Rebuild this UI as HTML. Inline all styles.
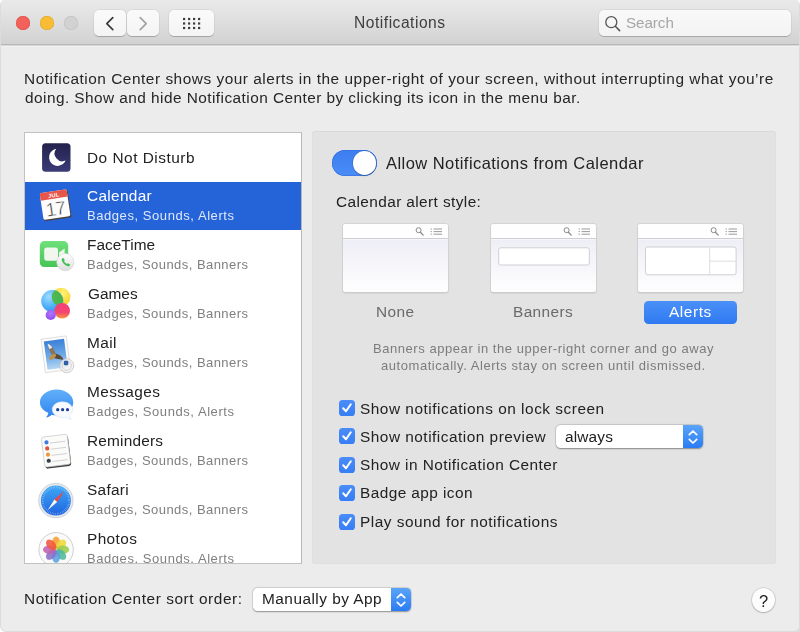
<!DOCTYPE html>
<html>
<head>
<meta charset="utf-8">
<title>Notifications</title>
<style>
*{box-sizing:border-box;margin:0;padding:0}
html,body{width:800px;height:632px;overflow:hidden;background:#fff;font-family:"Liberation Sans",sans-serif;color:#222}
#frame{position:absolute;left:0;top:0;width:800px;height:632px;background:#dcdcdc;border-radius:5px 5px 0 6px}
#win{position:absolute;left:1px;top:0;width:797.7px;height:631px;background:#ececec;border-radius:4px 4px 5px 5px;overflow:hidden}
#win>*{margin-left:-1px}
#tb{position:absolute;left:0;top:0;width:801px;height:46.8px;background:linear-gradient(#eaeaea,#d2d2d2 44px,#b9b9b9 44.2px,#b9b9b9 45.4px,#f3f3f3 45.6px)}
.t{position:absolute;white-space:nowrap;line-height:20px;will-change:transform}
.tl{position:absolute;top:15.5px;width:14px;height:14px;border-radius:50%}
.btn{position:absolute;top:9.5px;height:26px;background:linear-gradient(#fafafa,#f4f4f4);border-radius:5px;box-shadow:0 .5px .8px rgba(0,0,0,.22),0 0 0 .5px rgba(0,0,0,.06)}
#search{position:absolute;left:599px;top:10px;width:191.5px;height:25.5px;background:linear-gradient(#f9f9f9,#f3f3f3);border-radius:5px;box-shadow:0 .5px .8px rgba(0,0,0,.2),0 0 0 .5px rgba(0,0,0,.07)}
#list{position:absolute;left:24px;top:131.8px;width:278.2px;height:432.2px;background:#fff;border:1px solid #c2c2c2;border-right-color:#b8b8b8;overflow:hidden}
#list .t{margin-left:-25px;margin-top:-133px}
.row{position:absolute;left:0;width:276px;height:49px}
.row.sel{background:#2563d8}
.ic{position:absolute;left:10px;top:4px;width:42px;height:42px}
#panel{position:absolute;left:311.5px;top:131.3px;width:464.3px;height:433.2px;background:#e3e3e3;border-radius:3.5px;box-shadow:inset 0 1px 0 #dadada,inset 0 0 0 1px #dfdfdf}
.thumb{position:absolute;top:223.7px;width:105px;height:68px;background:linear-gradient(#fff 0,#fff 15px,#eeeef6 16px,#fdfdfe 92%);border-radius:2.5px;box-shadow:0 0 0 .7px #cfcfcf,0 1px 2px rgba(0,0,0,.2)}
.thumb .bar{position:absolute;left:0;top:0;width:100%;height:15px;background:#fefefe;border-bottom:1px solid #cfcfd3;border-radius:2.5px 2.5px 0 0}
.cb{position:absolute;left:339.2px;width:16.2px;height:15.8px;border-radius:3.6px;background:linear-gradient(#4a8df8,#377df5)}
.sel2{position:absolute;height:23.5px;background:#fff;border-radius:4.5px;box-shadow:0 .5px 1.5px rgba(0,0,0,.35),0 0 0 .5px rgba(0,0,0,.12)}
.sel2 .st{position:absolute;right:0;top:0;width:20.3px;height:23.5px;border-radius:0 4.5px 4.5px 0;background:linear-gradient(#5aa4f9,#2b7cf3)}
#toggle{position:absolute;left:331.6px;top:150px;width:45.6px;height:25.6px;border-radius:13px;background:linear-gradient(#3c7df0,#4b8df7);box-shadow:inset 0 0 0 .5px #2f6ad8}
#knob{position:absolute;right:.800px;top:.900px;width:23.6px;height:23.8px;border-radius:50%;background:#fff;box-shadow:0 0 0 .5px rgba(0,0,0,.15),0 1px 1.5px rgba(0,0,0,.2)}
#alertsbtn{position:absolute;left:644px;top:300.5px;width:92.5px;height:23.5px;border-radius:4.5px;background:linear-gradient(#4a90f8,#2f7af2)}
#helpbtn{position:absolute;left:751.7px;top:588.1px;width:23.7px;height:23.7px;border-radius:50%;background:#fcfcfc;box-shadow:0 .5px 1.5px rgba(0,0,0,.35),0 0 0 .5px rgba(0,0,0,.12)}

</style>
</head>
<body>
<div id="frame"></div>
<div id="win">
 <div id="tb">
  <div class="tl" style="left:16px;background:#f2615a;box-shadow:inset 0 0 0 .5px #dd4a42"></div>
  <div class="tl" style="left:40px;background:#f8bd35;box-shadow:inset 0 0 0 .5px #dea22a"></div>
  <div class="tl" style="left:63.5px;background:#d2d2d2;box-shadow:inset 0 0 0 .5px #bcbcbc"></div>
  <div class="btn" style="left:93.5px;width:32px">
   <svg width="32" height="27" viewBox="0 0 32 27"><path d="M18.8 7.7 L12.8 13.7 L18.8 19.7" fill="none" stroke="#3a3a3a" stroke-width="1.7" stroke-linecap="round" stroke-linejoin="round"/></svg>
  </div>
  <div class="btn" style="left:127px;width:32px">
   <svg width="32" height="27" viewBox="0 0 32 27"><path d="M13.2 7.7 L19.2 13.7 L13.2 19.7" fill="none" stroke="#a2a2a2" stroke-width="1.7" stroke-linecap="round" stroke-linejoin="round"/></svg>
  </div>
  <div class="btn" style="left:169px;width:44.5px">
   <svg width="45" height="27" viewBox="0 0 45 27" fill="#3d3d3d">
    <g><rect x="14" y="7.9" width="2.2" height="2.2"/><rect x="19" y="7.9" width="2.2" height="2.2"/><rect x="24" y="7.9" width="2.2" height="2.2"/><rect x="29" y="7.9" width="2.2" height="2.2"/></g>
    <g><rect x="14" y="12.4" width="2.2" height="2.2"/><rect x="19" y="12.4" width="2.2" height="2.2"/><rect x="24" y="12.4" width="2.2" height="2.2"/><rect x="29" y="12.4" width="2.2" height="2.2"/></g>
    <g><rect x="14" y="16.9" width="2.2" height="2.2"/><rect x="19" y="16.9" width="2.2" height="2.2"/><rect x="24" y="16.9" width="2.2" height="2.2"/><rect x="29" y="16.9" width="2.2" height="2.2"/></g>
    </svg>
  </div>
  <div class="t" id="title" style="left:353.5px;top:13.08px;font-size:15.6px;letter-spacing:0.513px;color:#3e3e3e;">Notifications</div>
  <div id="search">
   <svg style="position:absolute;left:4px;top:4px" width="20" height="20" viewBox="0 0 20 20"><circle cx="8.3" cy="8.2" r="5.5" fill="none" stroke="#555" stroke-width="1.3"/><path d="M12.3 12.3 L16.6 16.6" stroke="#555" stroke-width="1.5" stroke-linecap="round"/></svg>
  </div>
  <div class="t" id="search_t" style="left:625.75px;top:12.64px;font-size:15.2px;letter-spacing:-0.059px;color:#a6a6a6;">Search</div>
 </div>

 <div class="t" id="desc1" style="left:23.8px;top:68.56px;font-size:15.4px;letter-spacing:0.525px;color:#262626;">Notification Center shows your alerts in the upper-right of your screen, without interrupting what you’re</div>
 <div class="t" id="desc2" style="left:24.6px;top:87.56px;font-size:15.4px;letter-spacing:0.446px;color:#262626;">doing. Show and hide Notification Center by clicking its icon in the menu bar.</div>

 <div id="list">
  <div class="row" style="top:0px"><svg class="ic" width="42" height="42" viewBox="0 0 42 42"><defs><linearGradient id="gd" x1="0" y1="0" x2="0" y2="1"><stop offset="0" stop-color="#23224c"/><stop offset="1" stop-color="#3c3a76"/></linearGradient></defs>
<rect x="7.1" y="6.3" width="28.4" height="28.4" rx="3.5" fill="url(#gd)"/>
<path d="M21.2 11.8 A8.6 8.6 0 1 0 30.6 23.6 A7.8 7.8 0 0 1 21.2 11.8 Z" fill="#fff"/></svg></div>
  <div class="t" id="n_dnd" style="left:87.3px;top:148.46px;font-size:15.4px;letter-spacing:0.504px;color:#222;">Do Not Disturb</div>
  <div class="row sel" style="top:49px;height:48px"><svg class="ic" width="42" height="42" viewBox="0 0 42 42"><g transform="rotate(-8.5 20.5 19.5)">
<rect x="7.3" y="6" width="27.4" height="27.5" rx="1.6" fill="#4a4038"/>
<rect x="6.6" y="5" width="27.2" height="27" rx="1.6" fill="#fdfdfd"/>
<path d="M6.6 6.6 a1.6 1.6 0 0 1 1.6 -1.6 h24 a1.6 1.6 0 0 1 1.6 1.6 v5.9 h-27.2 z" fill="#e8554a"/>
<text x="20.2" y="11" font-size="5.6" font-weight="bold" fill="#fff" text-anchor="middle" letter-spacing="0.2">JUL</text>
<text x="19.8" y="29.3" font-size="19" fill="#262626" stroke="#fdfdfd" stroke-width=".55" text-anchor="middle" letter-spacing="-1">17</text>
</g></svg></div>
  <div class="t" id="n_cal" style="left:87.3px;top:185.86px;font-size:15.4px;letter-spacing:0.323px;color:#fff;">Calendar</div>
  <div class="t" id="s_cal" style="left:87.3px;top:205.84px;font-size:13px;letter-spacing:0.563px;color:#dfe8fb;">Badges, Sounds, Alerts</div>
  <div class="row" style="top:98px"><svg class="ic" width="42" height="42" viewBox="0 0 42 42"><defs><linearGradient id="gf" x1="0" y1="0" x2="0" y2="1"><stop offset="0" stop-color="#6fe07a"/><stop offset="1" stop-color="#48c456"/></linearGradient>
<linearGradient id="gfb" x1="0" y1="0" x2="0" y2="1"><stop offset="0" stop-color="#ffffff"/><stop offset="1" stop-color="#dcdcdc"/></linearGradient></defs>
<rect x="4.8" y="6.1" width="28.4" height="25.9" rx="4.6" fill="url(#gf)"/>
<rect x="9.2" y="12.6" width="13.8" height="13.1" rx="2.6" fill="#f1f6ef"/>
<path d="M24 17.4 L29.6 13.6 V24.8 L24 21 Z" fill="#f1f6ef"/>
<circle cx="30.3" cy="27.2" r="8.6" fill="url(#gfb)" stroke="#cfcfcf" stroke-width=".5"/>
<path d="M26.9 23.8 c.6-1.1 1.5-1.1 1.9-.4 l.8 1.4 c.2.5 0 1-.5 1.3 c.5 1.3 1.5 2.3 2.8 2.8 c.3-.5.8-.700 1.3-.500 l1.4.800 c.700.4.700 1.3-.400 1.9 c-2.7 1.3-8.6-4.6-7.3-7.3z" fill="#42c052"/></svg></div>
  <div class="t" id="n_ft" style="left:87.3px;top:234.86px;font-size:15.4px;letter-spacing:0.027px;color:#222;">FaceTime</div>
  <div class="t" id="s_ft" style="left:87.3px;top:254.84px;font-size:13px;letter-spacing:0.453px;color:#7f7f7f;">Badges, Sounds, Banners</div>
  <div class="row" style="top:147px"><svg class="ic" width="42" height="42" viewBox="0 0 42 42"><defs>
<radialGradient id="g1" cx=".35" cy=".3" r=".85"><stop offset="0" stop-color="#9fdcff"/><stop offset=".55" stop-color="#4fb0f8"/><stop offset="1" stop-color="#2f86f0"/></radialGradient>
<radialGradient id="g2" cx=".6" cy=".3" r=".8"><stop offset="0" stop-color="#fff27a"/><stop offset=".6" stop-color="#f8d83a"/><stop offset="1" stop-color="#f2b828"/></radialGradient>
<linearGradient id="g3" x1="0" y1="0" x2="0" y2="1"><stop offset="0" stop-color="#f2407e"/><stop offset=".6" stop-color="#f5456e"/><stop offset="1" stop-color="#f99a3c"/></linearGradient>
<radialGradient id="g4" cx=".5" cy=".35" r=".8"><stop offset="0" stop-color="#b078ff"/><stop offset="1" stop-color="#8a3ee8"/></radialGradient>
<clipPath id="cpb"><circle cx="17.2" cy="17" r="11"/></clipPath>
</defs>
<circle cx="26.1" cy="13" r="9.3" fill="url(#g2)"/>
<circle cx="17.2" cy="17" r="11" fill="url(#g1)"/>
<circle cx="26.1" cy="13" r="9.3" fill="#4cb544" fill-opacity=".92" clip-path="url(#cpb)"/>
<circle cx="27.2" cy="26.8" r="7.8" fill="url(#g3)"/>
<circle cx="15.7" cy="31" r="5.1" fill="url(#g4)"/></svg></div>
  <div class="t" id="n_gm" style="left:87.9px;top:283.86px;font-size:15.4px;letter-spacing:-0.005px;color:#222;">Games</div>
  <div class="t" id="s_gm" style="left:87.3px;top:303.83px;font-size:13px;letter-spacing:0.453px;color:#7f7f7f;">Badges, Sounds, Banners</div>
  <div class="row" style="top:196px"><svg class="ic" width="42" height="42" viewBox="0 0 42 42"><defs><linearGradient id="gs" x1="0" y1="0" x2="0" y2="1"><stop offset="0" stop-color="#3c80d6"/><stop offset=".55" stop-color="#6eaae8"/><stop offset="1" stop-color="#b4d6f2"/></linearGradient></defs>
<g transform="rotate(-7.5 20.8 21.3)">
<rect x="8.1" y="4.4" width="25.4" height="33.8" fill="#fcfcfc" stroke="#d4d4d4" stroke-width=".7"/>
<rect x="10.6" y="7" width="20.4" height="28.6" fill="url(#gs)"/>
</g>
<path d="M12.6 10.8 C15.6 11.4 19.4 16.4 20.6 20.6 L17.4 23 C15.6 19.4 13 15.4 12.6 10.8Z" fill="#8a7458"/>
<path d="M12.6 10.8 C14.6 11.2 16.2 13 17.2 14.6 L14.6 16.2 C13.6 14.4 12.8 12.6 12.6 10.8Z" fill="#ecebe6"/>
<path d="M19 20.8 C23.4 20.6 27.4 23.4 28.8 27 C25.2 26.4 21 26.2 17.8 24.6Z" fill="#5a4a3c"/>
<ellipse cx="17.6" cy="23.8" rx="4" ry="2.1" fill="#b8924e" transform="rotate(-38 17.6 23.8)"/>
<circle cx="31.8" cy="32.7" r="7" fill="#f0f0f0" fill-opacity=".82" stroke="#bdbdbd" stroke-width=".7"/>
<circle cx="31.8" cy="32.7" r="4.6" fill="none" stroke="#c4c4c4" stroke-width=".6"/>
<rect x="28.9" y="27.8" width="4.4" height="4.4" rx="1" fill="#2f5fa8"/></svg></div>
  <div class="t" id="n_mail" style="left:87.3px;top:332.86px;font-size:15.4px;letter-spacing:0.4px;color:#222;">Mail</div>
  <div class="t" id="s_mail" style="left:87.3px;top:352.83px;font-size:13px;letter-spacing:0.453px;color:#7f7f7f;">Badges, Sounds, Banners</div>
  <div class="row" style="top:245px"><svg class="ic" width="42" height="42" viewBox="0 0 42 42"><defs><linearGradient id="gm1" x1="0" y1="0" x2="0" y2="1"><stop offset="0" stop-color="#62b0fa"/><stop offset="1" stop-color="#2f84f0"/></linearGradient></defs>
<path d="M21.6 7.6 c9.2 0 16.7 5.7 16.7 12.8 s-7.5 12.8-16.7 12.8 c-1.7 0-3.3-.2-4.8-.550 c-1.5 1.6-3.5 2.5-5.8 2.65 c1.3-1.2 2.1-2.8 2.3-4.5 c-5.1-2.3-8.4-6.1-8.4-10.4 c0-7.1 7.5-12.8 16.7-12.8z" fill="url(#gm1)"/>
<path d="M27.4 19.8 c5.7 0 10.2 3.5 10.2 7.8 c0 2.2-1.2 4.2-3.1 5.6 c.1 1.6.8 3 2 4 c-2 0-3.9-.8-5.2-2.2 c-1.2.3-2.5.4-3.9.4 c-5.7 0-10.2-3.5-10.2-7.8 s4.5-7.8 10.2-7.8z" fill="#f7fafe" stroke="#cfdff3" stroke-width=".5"/>
<circle cx="22.7" cy="27.7" r="1.6" fill="#1f3f9a"/><circle cx="27.6" cy="27.7" r="1.6" fill="#1f3f9a"/><circle cx="32.5" cy="27.7" r="1.6" fill="#1f3f9a"/></svg></div>
  <div class="t" id="n_msg" style="left:87.3px;top:381.86px;font-size:15.4px;letter-spacing:0.4px;color:#222;">Messages</div>
  <div class="t" id="s_msg" style="left:87.3px;top:401.83px;font-size:13px;letter-spacing:0.563px;color:#7f7f7f;">Badges, Sounds, Alerts</div>
  <div class="row" style="top:294px"><svg class="ic" width="42" height="42" viewBox="0 0 42 42"><g transform="rotate(-7 21 20)">
<rect x="8.6" y="6" width="26" height="30.5" rx="2.4" fill="#3a3a3a"/>
<rect x="8" y="4.6" width="26" height="30.2" rx="2.2" fill="#fbfbf9" stroke="#c8c8c8" stroke-width=".7"/>
<g stroke="#c9c9c9" stroke-width=".8"><path d="M16 11.4H31.5M16 17.6H31.5M16 23.8H31.5M16 30H31.5"/></g>
<circle cx="12.6" cy="10.2" r="2.1" fill="#3d7be6"/>
<circle cx="12.6" cy="16.4" r="2.1" fill="#e2513d"/>
<circle cx="12.6" cy="22.6" r="2.1" fill="#ec9a3b"/>
<circle cx="12.6" cy="28.8" r="2.1" fill="#3b3f4c"/>
</g></svg></div>
  <div class="t" id="n_rem" style="left:87.3px;top:430.86px;font-size:15.4px;letter-spacing:0.198px;color:#222;">Reminders</div>
  <div class="t" id="s_rem" style="left:87.3px;top:450.83px;font-size:13px;letter-spacing:0.453px;color:#7f7f7f;">Badges, Sounds, Banners</div>
  <div class="row" style="top:343px"><svg class="ic" width="42" height="42" viewBox="0 0 42 42"><defs><linearGradient id="gsa" x1="0" y1="0" x2="0" y2="1"><stop offset="0" stop-color="#3fa8f8"/><stop offset="1" stop-color="#1e63de"/></linearGradient></defs>
<circle cx="20.9" cy="20.6" r="17.2" fill="#e6e9ee" stroke="#bfc4cc" stroke-width=".7"/>
<circle cx="20.9" cy="20.6" r="15" fill="url(#gsa)"/>
<circle cx="20.9" cy="20.6" r="13.3" fill="none" stroke="#fff" stroke-opacity=".5" stroke-width="2" stroke-dasharray=".5 1.24"/>
<path d="M29.2 11 L19.4 19.4 L22.2 22 Z" fill="#f0463c"/>
<path d="M12.6 30.2 L19.4 19.4 L22.2 22 Z" fill="#f7f7f7"/></svg></div>
  <div class="t" id="n_saf" style="left:87.3px;top:479.86px;font-size:15.4px;letter-spacing:0.292px;color:#222;">Safari</div>
  <div class="t" id="s_saf" style="left:87.3px;top:499.83px;font-size:13px;letter-spacing:0.453px;color:#7f7f7f;">Badges, Sounds, Banners</div>
  <div class="row" style="top:392px"><svg class="ic" width="42" height="42" viewBox="0 0 42 42"><circle cx="21.1" cy="20.7" r="17.2" fill="#fafafa" stroke="#cbcbcb" stroke-width=".9"/><ellipse cx="21.1" cy="13.9" rx="4.1" ry="6.3" fill="#f5a030" fill-opacity=".88" transform="rotate(0 21.1 20.7)"/><ellipse cx="21.1" cy="13.9" rx="4.1" ry="6.3" fill="#f0d838" fill-opacity=".88" transform="rotate(45 21.1 20.7)"/><ellipse cx="21.1" cy="13.9" rx="4.1" ry="6.3" fill="#98cc50" fill-opacity=".88" transform="rotate(90 21.1 20.7)"/><ellipse cx="21.1" cy="13.9" rx="4.1" ry="6.3" fill="#4cb89a" fill-opacity=".88" transform="rotate(135 21.1 20.7)"/><ellipse cx="21.1" cy="13.9" rx="4.1" ry="6.3" fill="#5aa0e0" fill-opacity=".88" transform="rotate(180 21.1 20.7)"/><ellipse cx="21.1" cy="13.9" rx="4.1" ry="6.3" fill="#8870c8" fill-opacity=".88" transform="rotate(225 21.1 20.7)"/><ellipse cx="21.1" cy="13.9" rx="4.1" ry="6.3" fill="#c060b0" fill-opacity=".88" transform="rotate(270 21.1 20.7)"/><ellipse cx="21.1" cy="13.9" rx="4.1" ry="6.3" fill="#f0583c" fill-opacity=".88" transform="rotate(315 21.1 20.7)"/></svg></div>
  <div class="t" id="n_ph" style="left:87.3px;top:528.86px;font-size:15.4px;letter-spacing:0.4px;color:#222;">Photos</div>
  <div class="t" id="s_ph" style="left:87.3px;top:548.83px;font-size:13px;letter-spacing:0.563px;color:#7f7f7f;">Badges, Sounds, Alerts</div>
 </div>

 <div id="panel"></div>
 <div id="toggle"><div id="knob"></div></div>
 <div class="t" id="allow" style="left:386px;top:153.07px;font-size:16.5px;letter-spacing:0.449px;color:#222;">Allow Notifications from Calendar</div>
 <div class="t" id="cas" style="left:336px;top:192.06px;font-size:15.4px;letter-spacing:0.4px;color:#222;">Calendar alert style:</div>
 <div class="thumb" style="left:343.3px"><div class="bar"></div><svg style="position:absolute;left:0;top:0" width="105" height="68" viewBox="0 0 105 68">
<circle cx="75.6" cy="6.2" r="2.5" fill="none" stroke="#8a8a8a" stroke-width="1"/><path d="M77.4 8.2 L80.2 11.1" stroke="#8a8a8a" stroke-width="1.3" stroke-linecap="round"/>
<g stroke="#909090" stroke-width=".9"><path d="M90.5 5H99M90.5 7.6H99M90.5 10.2H99"/><path d="M87.6 5h1.3M87.6 7.6h1.3M87.6 10.2h1.3"/></g>
</svg></div>
 <div class="thumb" style="left:490.9px"><div class="bar"></div><svg style="position:absolute;left:0;top:0" width="105" height="68" viewBox="0 0 105 68">
<circle cx="75.6" cy="6.2" r="2.5" fill="none" stroke="#8a8a8a" stroke-width="1"/><path d="M77.4 8.2 L80.2 11.1" stroke="#8a8a8a" stroke-width="1.3" stroke-linecap="round"/>
<g stroke="#909090" stroke-width=".9"><path d="M90.5 5H99M90.5 7.6H99M90.5 10.2H99"/><path d="M87.6 5h1.3M87.6 7.6h1.3M87.6 10.2h1.3"/></g>
<rect x="7.7" y="23.8" width="90.6" height="17.2" rx="2" fill="#fff" stroke="#cfcfd4" stroke-width="1"/></svg></div>
 <div class="thumb" style="left:638.2px"><div class="bar"></div><svg style="position:absolute;left:0;top:0" width="105" height="68" viewBox="0 0 105 68">
<circle cx="75.6" cy="6.2" r="2.5" fill="none" stroke="#8a8a8a" stroke-width="1"/><path d="M77.4 8.2 L80.2 11.1" stroke="#8a8a8a" stroke-width="1.3" stroke-linecap="round"/>
<g stroke="#909090" stroke-width=".9"><path d="M90.5 5H99M90.5 7.6H99M90.5 10.2H99"/><path d="M87.6 5h1.3M87.6 7.6h1.3M87.6 10.2h1.3"/></g>
<rect x="7.5" y="23" width="90.6" height="27.8" rx="2.2" fill="#fff" stroke="#cfcfd4" stroke-width="1"/><path d="M71.7 23V50.8M71.7 37.2H98" stroke="#dcdce0" stroke-width="1" fill="none"/></svg></div>
 <div class="t" id="none" style="left:376.3px;top:302.46px;font-size:15.4px;letter-spacing:0.4px;color:#6a6a6a;">None</div>
 <div class="t" id="banners" style="left:512.8px;top:302.46px;font-size:15.4px;letter-spacing:0.4px;color:#6a6a6a;">Banners</div>
 <div id="alertsbtn"></div>
 <div class="t" id="alerts" style="left:669.2px;top:302.06px;font-size:15.4px;letter-spacing:0.58px;color:#fff;">Alerts</div>
 <div class="t" id="help1" style="left:373.2px;top:338.84px;font-size:13px;letter-spacing:0.555px;color:#7c7c7c;">Banners appear in the upper-right corner and go away</div>
 <div class="t" id="help2" style="left:380.5px;top:356.44px;font-size:13px;letter-spacing:0.556px;color:#7c7c7c;">automatically. Alerts stay on screen until dismissed.</div>
 <div class="cb" style="top:400.2px"><svg width="16" height="16" viewBox="0 0 16 16" style="position:absolute;left:0;top:0"><path d="M4.2 8.3 L7 11.3 L11.8 4.3" fill="none" stroke="#fff" stroke-width="2" stroke-linecap="round" stroke-linejoin="round"/></svg></div><div class="cb" style="top:428px"><svg width="16" height="16" viewBox="0 0 16 16" style="position:absolute;left:0;top:0"><path d="M4.2 8.3 L7 11.3 L11.8 4.3" fill="none" stroke="#fff" stroke-width="2" stroke-linecap="round" stroke-linejoin="round"/></svg></div><div class="cb" style="top:457px"><svg width="16" height="16" viewBox="0 0 16 16" style="position:absolute;left:0;top:0"><path d="M4.2 8.3 L7 11.3 L11.8 4.3" fill="none" stroke="#fff" stroke-width="2" stroke-linecap="round" stroke-linejoin="round"/></svg></div><div class="cb" style="top:485.2px"><svg width="16" height="16" viewBox="0 0 16 16" style="position:absolute;left:0;top:0"><path d="M4.2 8.3 L7 11.3 L11.8 4.3" fill="none" stroke="#fff" stroke-width="2" stroke-linecap="round" stroke-linejoin="round"/></svg></div><div class="cb" style="top:514px"><svg width="16" height="16" viewBox="0 0 16 16" style="position:absolute;left:0;top:0"><path d="M4.2 8.3 L7 11.3 L11.8 4.3" fill="none" stroke="#fff" stroke-width="2" stroke-linecap="round" stroke-linejoin="round"/></svg></div><div class="t" id="cb1" style="left:360px;top:399.16px;font-size:15.4px;letter-spacing:0.518px;color:#222;">Show notifications on lock screen</div><div class="t" id="cb2" style="left:360px;top:426.66px;font-size:15.4px;letter-spacing:0.497px;color:#222;">Show notification preview</div><div class="t" id="cb3" style="left:360px;top:455.06px;font-size:15.4px;letter-spacing:0.452px;color:#222;">Show in Notification Center</div><div class="t" id="cb4" style="left:360px;top:482.56px;font-size:15.4px;letter-spacing:0.428px;color:#222;">Badge app icon</div><div class="t" id="cb5" style="left:360px;top:511.86px;font-size:15.4px;letter-spacing:0.5px;color:#222;">Play sound for notifications</div>
 <div class="sel2" style="left:555.5px;top:424.5px;width:147.5px"><div class="st"><svg width="20" height="24" viewBox="0 0 20 24" style="position:absolute;left:0;top:0"><path d="M6.3 9.6 L10 6 L13.7 9.6 M6.3 14.4 L10 18 L13.7 14.4" fill="none" stroke="#fff" stroke-width="1.7" stroke-linecap="round" stroke-linejoin="round"/></svg></div></div>
 <div class="t" id="always" style="left:564.5px;top:427.06px;font-size:15.4px;letter-spacing:0.175px;color:#222;">always</div>
 <div class="t" id="sortlab" style="left:23.7px;top:588.56px;font-size:15.4px;letter-spacing:0.567px;color:#222;">Notification Center sort order:</div>
 <div class="sel2" style="left:252.5px;top:587.8px;width:158.5px;height:23px"><div class="st" style="height:23px"><svg width="20" height="24" viewBox="0 0 20 24" style="position:absolute;left:0;top:0"><path d="M6.3 9.6 L10 6 L13.7 9.6 M6.3 14.4 L10 18 L13.7 14.4" fill="none" stroke="#fff" stroke-width="1.7" stroke-linecap="round" stroke-linejoin="round"/></svg></div></div>
 <div class="t" id="manually" style="left:262px;top:588.96px;font-size:15.4px;letter-spacing:0.48px;color:#222;">Manually by App</div>
 <div id="helpbtn"></div>
 <div class="t" id="qmark" style="left:759.1px;top:590.92px;font-size:16.5px;letter-spacing:0px;color:#222;">?</div>
</div>
</body>
</html>
